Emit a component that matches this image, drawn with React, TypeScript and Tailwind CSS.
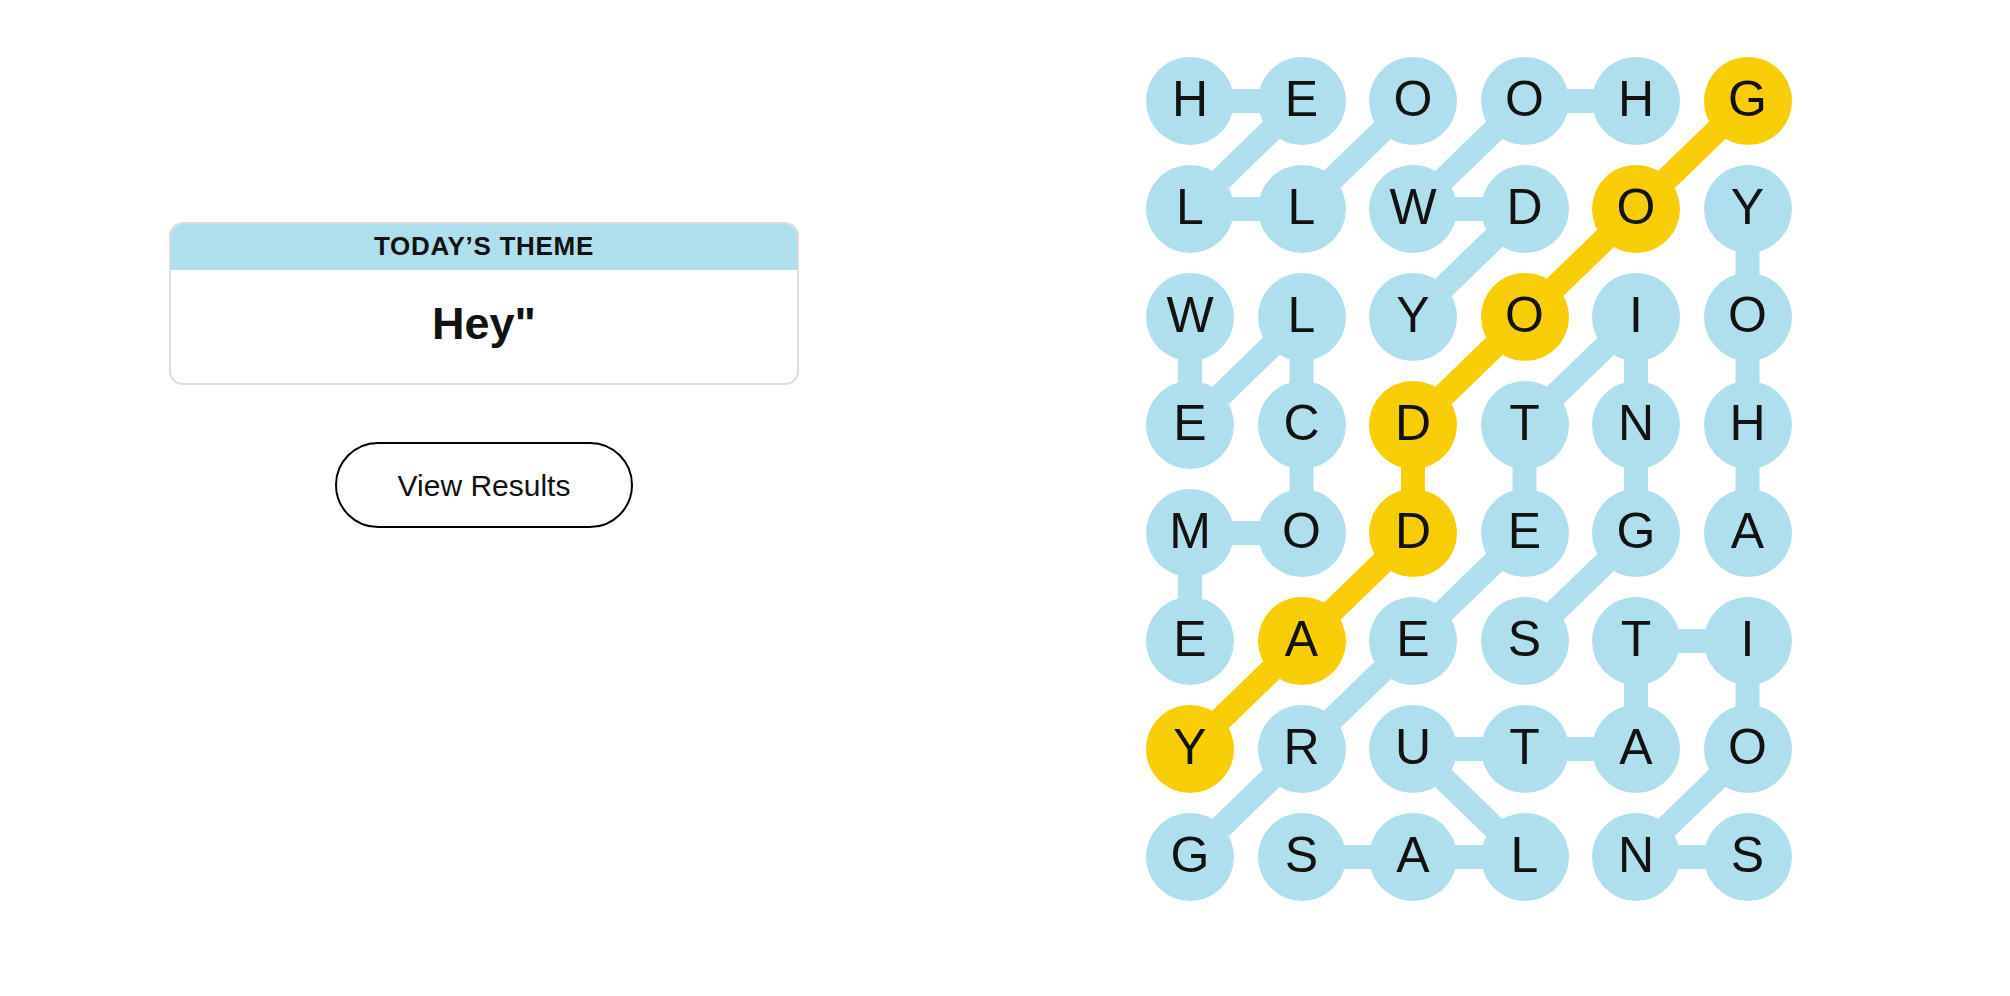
import React from 'react';

const LETTERS = [
  'HEOOHG',
  'LLWDOY',
  'WLYOIO',
  'ECDTNH',
  'MODEGA',
  'EAESTI',
  'YRUTAO',
  'GSALNS',
];

type Cell = [number, number];

// found words, as paths through the board
const WORDS: { path: Cell[]; spangram?: boolean }[] = [
  { path: [[0, 0], [0, 1], [1, 0], [1, 1], [0, 2]] },
  { path: [[0, 4], [0, 3], [1, 2], [1, 3], [2, 2]] },
  { path: [[2, 0], [3, 0], [2, 1], [3, 1], [4, 1], [4, 0], [5, 0]] },
  { path: [[4, 5], [3, 5], [2, 5], [1, 5]] },
  { path: [[7, 0], [6, 1], [5, 2], [4, 3], [3, 3], [2, 4], [3, 4], [4, 4], [5, 3]] },
  { path: [[7, 1], [7, 2], [7, 3], [6, 2], [6, 3], [6, 4], [5, 4], [5, 5], [6, 5], [7, 4], [7, 5]] },
  { path: [[0, 5], [1, 4], [2, 3], [3, 2], [4, 2], [5, 1], [6, 0]], spangram: true },
];

const CELL = 88;
const STEP_X = 111.5;
const STEP_Y = 108;
const BOARD_W = CELL + STEP_X * 5;
const BOARD_H = CELL + STEP_Y * 7;

const cx = (c: number) => CELL / 2 + c * STEP_X;
const cy = (r: number) => CELL / 2 + r * STEP_Y;

const spangramCells = new Set(
  WORDS.filter((w) => w.spangram).flatMap((w) => w.path.map(([r, c]) => `${r}-${c}`))
);

const Board = () => (
  <div className="relative" style={{ width: BOARD_W, height: BOARD_H }}>
    {/* connector lines sit under the circles */}
    <svg className="absolute inset-0" width={BOARD_W} height={BOARD_H}>
      {WORDS.map((w, i) =>
        w.path.slice(1).map(([r, c], j) => {
          const [pr, pc] = w.path[j];
          return (
            <line
              key={`${i}-${j}`}
              x1={cx(pc)}
              y1={cy(pr)}
              x2={cx(c)}
              y2={cy(r)}
              stroke={w.spangram ? '#f8cd05' : '#aedfee'}
              strokeWidth={24}
            />
          );
        })
      )}
    </svg>
    <div className="relative grid grid-cols-6 gap-x-[23.5px] gap-y-[20px]">
      {LETTERS.flatMap((row, r) =>
        row.split('').map((ch, c) => (
          <div
            key={`${r}-${c}`}
            className={`w-[88px] h-[88px] rounded-full flex items-center justify-center text-[50px] leading-none text-[#121212] ${
              spangramCells.has(`${r}-${c}`) ? 'bg-[#f8cd05]' : 'bg-[#aedfee]'
            }`}
          >
            <span className="-mt-[5px]">{ch}</span>
          </div>
        ))
      )}
    </div>
  </div>
);

export default function App() {
  return (
    <div
      className="w-full h-[996px] bg-white flex text-[#121212]"
      style={{ fontFamily: '"Liberation Sans", Arial, sans-serif' }}
    >
      {/* Left: theme card + results button */}
      <div className="w-[968px] flex flex-col items-center pt-[222px]">
        <div className="w-[630px] h-[163px] rounded-[14px] border-2 border-[#dcdcdc] overflow-hidden flex flex-col">
          <div className="h-[48px] -mx-[2px] -mt-[2px] bg-[#aedfee] flex items-center justify-center">
            <span className="text-[26px] font-bold tracking-[0.7px] uppercase">Today’s Theme</span>
          </div>
          <div className="flex-1 flex items-center justify-center pb-[6px]">
            <span className="text-[45px] font-bold">Hey"</span>
          </div>
        </div>
        <button className="mt-[57px] w-[298px] h-[86px] rounded-full border-2 border-black text-[30px] bg-white">
          View Results
        </button>
      </div>

      {/* Right: word board */}
      <div className="pl-[178px] pt-[57px]">
        <Board />
      </div>
    </div>
  );
}
